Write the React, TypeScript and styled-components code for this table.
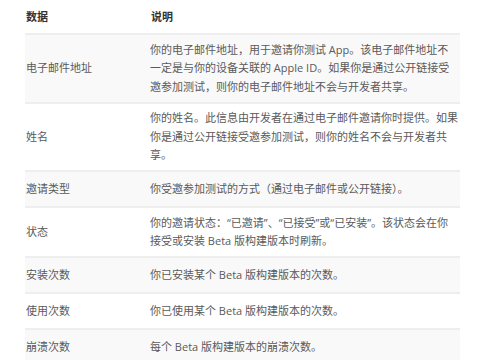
import styled, { createGlobalStyle } from 'styled-components';

type Entry = {
  name: string;
  lines: string[];
};

const entries: Entry[] = [
  {
    name: '电子邮件地址',
    lines: [
      '你的电子邮件地址，用于邀请你测试 App。该电子邮件地址不',
      '一定是与你的设备关联的 Apple ID。如果你是通过公开链接受',
      '邀参加测试，则你的电子邮件地址不会与开发者共享。',
    ],
  },
  {
    name: '姓名',
    lines: [
      '你的姓名。此信息由开发者在通过电子邮件邀请你时提供。如果',
      '你是通过公开链接受邀参加测试，则你的姓名不会与开发者共',
      '享。',
    ],
  },
  {
    name: '邀请类型',
    lines: ['你受邀参加测试的方式（通过电子邮件或公开链接）。'],
  },
  {
    name: '状态',
    lines: [
      '你的邀请状态：“已邀请”、“已接受”或“已安装”。该状态会在你',
      '接受或安装 Beta 版构建版本时刷新。',
    ],
  },
  {
    name: '安装次数',
    lines: ['你已安装某个 Beta 版构建版本的次数。'],
  },
  {
    name: '使用次数',
    lines: ['你已使用某个 Beta 版构建版本的次数。'],
  },
  {
    name: '崩溃次数',
    lines: ['每个 Beta 版构建版本的崩溃次数。'],
  },
];

const GlobalStyle = createGlobalStyle`
  html, body {
    margin: 0;
    padding: 0;
    background: #ffffff;
  }
  body {
    font-family: "Open Sans", "Noto Sans CJK SC", sans-serif;
    -webkit-font-smoothing: antialiased;
  }
`;

const Page = styled.div`
  width: 500px;
  height: 360px;
  overflow: hidden;
  padding: 0 0 0 25px;
  box-sizing: border-box;
`;

const Table = styled.table`
  width: 435px;
  table-layout: fixed;
  border-collapse: collapse;
  font-size: 11px;
  color: #5a5a5a;
`;

const HeadCell = styled.th<{ $wide?: boolean }>`
  text-align: left;
  font-weight: 600;
  color: #333333;
  line-height: 18px;
  padding: 8px 0 7px 1px;
  width: ${(p) => (p.$wide ? 'auto' : '124px')};
`;

const Row = styled.tr<{ $shaded: boolean }>`
  background: ${(p) => (p.$shaded ? '#f9f9f9' : '#ffffff')};
  border-top: 2px solid #eeeeee;
`;

const KeyCell = styled.td`
  vertical-align: middle;
  line-height: 18px;
  padding: 8px 0 8px 1px;
  white-space: nowrap;
`;

const DescCell = styled.td`
  vertical-align: middle;
  line-height: 18.5px;
  padding: 5.5px 0 5.5px 0;
  overflow: visible;
`;

const Line = styled.span`
  display: block;
  white-space: nowrap;
`;

const App = () => {
  return (
    <Page>
      <GlobalStyle />
      <Table>
        <thead>
          <tr>
            <HeadCell>数据</HeadCell>
            <HeadCell $wide>说明</HeadCell>
          </tr>
        </thead>
        <tbody>
          {entries.map((entry, i) => (
            <Row key={entry.name} $shaded={i % 2 === 0}>
              <KeyCell>{entry.name}</KeyCell>
              <DescCell>
                {entry.lines.map((line) => (
                  <Line key={line}>{line}</Line>
                ))}
              </DescCell>
            </Row>
          ))}
        </tbody>
      </Table>
    </Page>
  );
};

export default App;
